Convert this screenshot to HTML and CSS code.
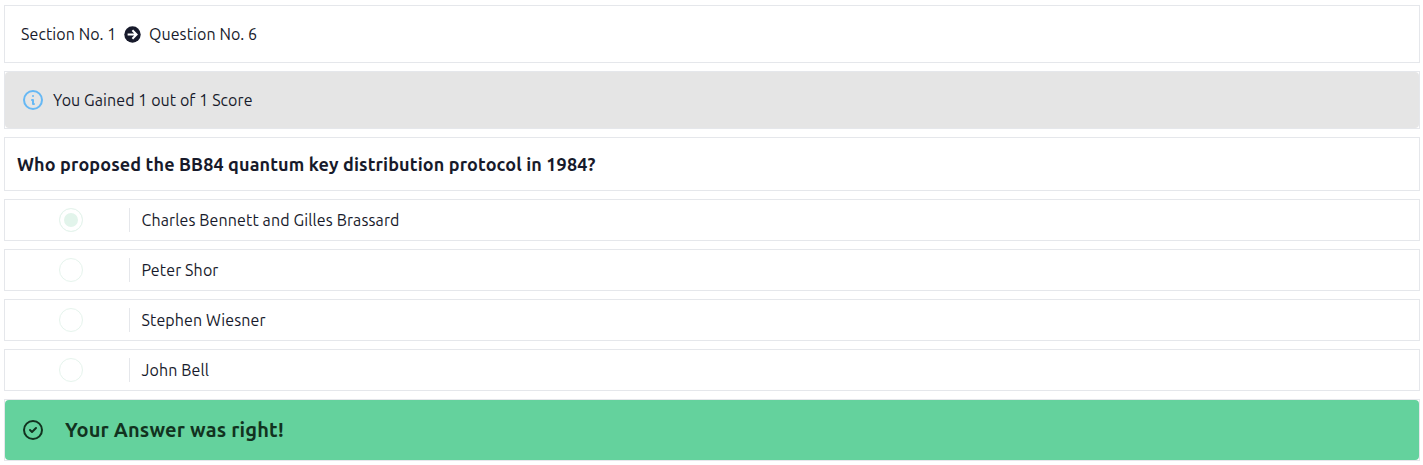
FILE: index.html
```html
<!DOCTYPE html>
<html lang="en">
<head>
<meta charset="utf-8">
<title>Question review</title>
<link rel="stylesheet" href="styles.css">
</head>
<body>
<main class="review">
  <header class="card crumbs">
    <span class="crumb-section">Section No. 1</span>
    <svg class="crumb-arrow" viewBox="0 0 17 17"><circle cx="8.5" cy="8.5" r="8.2" fill="#171a2b"/><path d="M3.6 8.5H12.4M8.4 4.2l4.2 4.3-4.2 4.3" fill="none" stroke="#fff" stroke-width="2"/></svg>
    <span>Question No. 6</span>
  </header>
  <section class="card">
    <div class="alert alert-score">
      <svg class="alert-icon" viewBox="0 0 24 24"><path d="M13 16h-1v-4h-1m1-4h.01M21 12a9 9 0 11-18 0 9 9 0 0118 0z"/></svg>
      <span>You Gained 1 out of 1 Score</span>
    </div>
  </section>
  <section class="card question"><h1 class="question-text">Who proposed the BB84 quantum key distribution protocol in 1984?</h1></section>
  <label class="card option"><span class="option-mark"><span class="radio radio-checked"></span></span><span class="option-text">Charles Bennett and Gilles Brassard</span></label>
  <label class="card option"><span class="option-mark"><span class="radio"></span></span><span class="option-text">Peter Shor</span></label>
  <label class="card option"><span class="option-mark"><span class="radio"></span></span><span class="option-text">Stephen Wiesner</span></label>
  <label class="card option"><span class="option-mark"><span class="radio"></span></span><span class="option-text">John Bell</span></label>
  <section class="card">
    <div class="alert alert-right">
      <svg class="alert-icon" viewBox="0 0 24 24"><path d="M9 12l2 2 4-4m6 2a9 9 0 11-18 0 9 9 0 0118 0z"/></svg>
      <strong class="right-text">Your Answer was right!</strong>
    </div>
  </section>
</main>
</body>
</html>
```
FILE: styles.css
```css
* { box-sizing: border-box; }
body {
  margin: 0;
  background: #fff;
  color: #171a2b;
  font: 16px/24px Ubuntu, "Noto Sans", sans-serif;
  letter-spacing: 0.08px;
}
.review { display: flex; flex-direction: column; gap: 8px; padding: 5px 3px 4px 4px; }
.card { border: 1px solid #e5e7eb; white-space: nowrap; }
.crumbs { display: flex; align-items: center; height: 58px; padding: 0 16px; }
.crumb-section { width: 95px; }
.crumb-arrow { width: 17px; height: 17px; margin: 0 8px; }
.alert { display: flex; align-items: center; border-radius: 4px; padding: 0 16px; }
.alert-icon { width: 24px; height: 24px; fill: none; stroke: currentColor; stroke-width: 2; stroke-linecap: round; stroke-linejoin: round; }
.alert-score { height: 56px; background: #e5e5e5; gap: 8px; }
.alert-score .alert-icon { stroke: #66b8f4; }
.question { height: 54px; padding: 14px 12px; }
.question-text { margin: 0; font-size: 18px; line-height: 24px; font-weight: 700; letter-spacing: 0.125px; }
.option { display: flex; align-items: center; height: 42px; }
.option-mark { display: flex; align-items: center; width: 125px; height: 24px; padding-left: 54px; border-right: 1px solid #e5e7eb; }
.radio { width: 24px; height: 24px; border: 1px solid #e6f4ed; border-radius: 50%; }
.radio-checked { background: #e2f4eb; box-shadow: inset 0 0 0 4px #fff; }
.option-text { padding-left: 11.5px; letter-spacing: 0.12px; }
.alert-right { height: 60px; background: #64d29d; color: #12321f; gap: 20px; }
.right-text { font-size: 20px; letter-spacing: 0.16px; }
```
